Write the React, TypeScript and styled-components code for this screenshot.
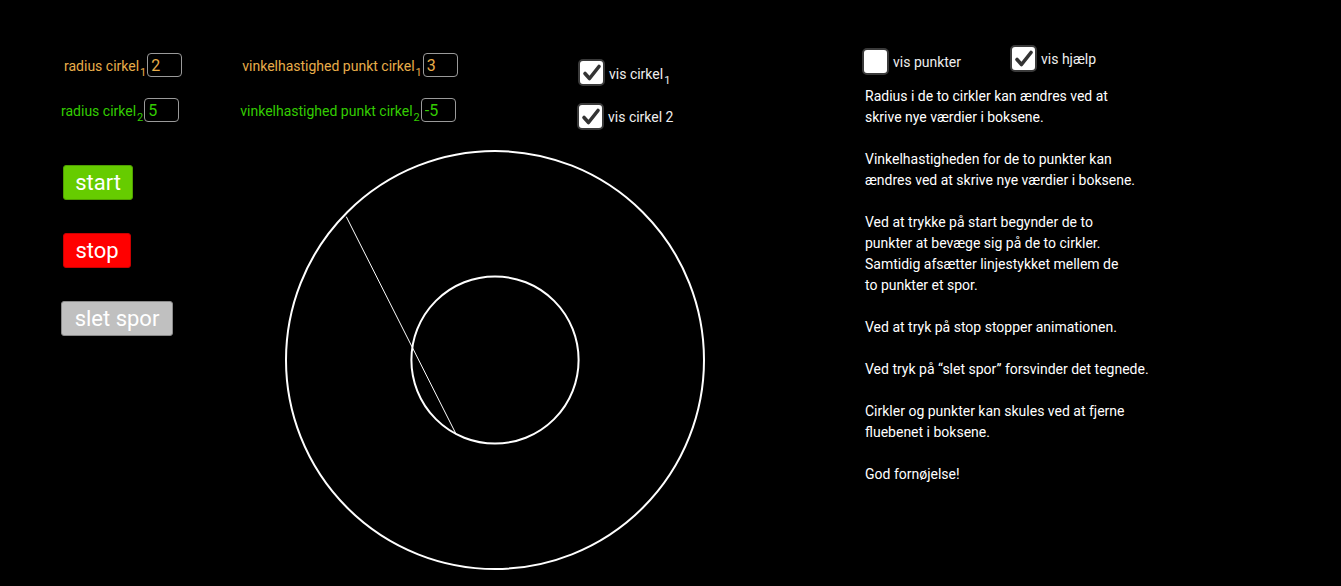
import React from 'react'
import styled, { createGlobalStyle } from 'styled-components'

const GlobalStyle = createGlobalStyle`
  html, body {
    margin: 0;
    padding: 0;
    background: #000000;
  }
  body {
    font-family: Roboto, 'Liberation Sans', sans-serif;
  }
`

const ORANGE = '#e8ad4a'
const GREEN = '#33cc00'

const Applet = styled.div`
  display: flex;
  width: 1341px;
  height: 586px;
  background: #000000;
  overflow: hidden;
`

const LeftPane = styled.div`
  display: flex;
  flex-direction: column;
  width: 862px;
  flex-shrink: 0;
`

const TopBand = styled.div`
  display: grid;
  grid-template-columns: 577px 1fr;
  height: 150px;
  box-sizing: border-box;
  padding-top: 53px;
`

const FieldRows = styled.div`
  display: flex;
  flex-direction: column;
  gap: 21px;
`

const FieldRow = styled.div<{ $indent: number; $gap: number }>`
  display: flex;
  align-items: center;
  padding-left: ${(p) => p.$indent}px;
  gap: ${(p) => p.$gap}px;
  height: 24px;
`

const Field = styled.label<{ $color: string }>`
  display: flex;
  align-items: center;
  color: ${(p) => p.$color};
  font-size: 14px;
  white-space: nowrap;
`

const Caption = styled.span`
  display: inline-block;
  line-height: 16px;
  padding-top: 2px;
`

const Sub = styled.sub`
  font-size: 11px;
  vertical-align: -5px;
  line-height: 0;
  margin-left: 1px;
`

const ValueBox = styled.input<{ $color: string }>`
  width: 35px;
  height: 24px;
  box-sizing: border-box;
  margin: 0 0 0 1px;
  padding: 0 0 0 3px;
  background: #000000;
  border: 1px solid #9a9a9a;
  border-radius: 4px;
  color: ${(p) => p.$color};
  font-family: Roboto, 'Liberation Sans', sans-serif;
  font-size: 16px;
  outline: none;
`

const CheckColumn = styled.div`
  display: flex;
  flex-direction: column;
  gap: 17px;
  padding-top: 6px;
`

const CheckItem = styled.label<{ $shift?: number; $lift?: number; $width?: number }>`
  display: flex;
  align-items: center;
  gap: 4px;
  width: ${(p) => (p.$width ? `${p.$width}px` : 'auto')};
  margin-left: ${(p) => p.$shift ?? 0}px;
  margin-top: ${(p) => p.$lift ?? 0}px;
  color: #eeeeee;
  font-size: 14px;
  white-space: nowrap;
`

const Box = styled.span`
  display: flex;
  align-items: center;
  justify-content: center;
  width: 27px;
  height: 27px;
  box-sizing: border-box;
  background: #ffffff;
  border: 2px solid #3a3a3a;
  border-radius: 5px;
  flex-shrink: 0;
`

const LowerBand = styled.div`
  display: flex;
`

const ButtonColumn = styled.div`
  display: flex;
  flex-direction: column;
  align-items: flex-start;
  gap: 33px;
  width: 285px;
  padding-top: 15px;
`

const ActionButton = styled.button<{ $bg: string; $edge: string; $w: number; $shift: number }>`
  width: ${(p) => p.$w}px;
  height: 35px;
  margin: 0 0 0 ${(p) => p.$shift}px;
  padding: 0;
  background: ${(p) => p.$bg};
  border: 1px solid ${(p) => p.$edge};
  border-radius: 3px;
  color: #ffffff;
  font-family: Roboto, 'Liberation Sans', sans-serif;
  font-size: 22px;
  line-height: 33px;
  text-align: center;
`

const Drawing = styled.svg`
  display: block;
  width: 420px;
  height: 436px;
`

const RightPane = styled.div`
  display: flex;
  flex-direction: column;
  padding-top: 45px;
`

const CheckRow = styled.div`
  display: flex;
  align-items: flex-start;
`

const HelpText = styled.div`
  margin-top: 11px;
  padding-left: 3px;
  color: #ffffff;
  font-size: 14px;
  line-height: 21px;
  white-space: pre-line;
`

const Checkbox = ({ checked }: { checked: boolean }) => (
  <Box>
    {checked && (
      <svg width='22' height='22' viewBox='0 0 22 22'>
        <polyline
          points='4,11.5 8.5,16.5 18,4.5'
          fill='none'
          stroke='#333333'
          strokeWidth='3.6'
          strokeLinecap='round'
          strokeLinejoin='round'
        />
      </svg>
    )}
  </Box>
)

const help = `Radius i de to cirkler kan ændres ved at
skrive nye værdier i boksene.

Vinkelhastigheden for de to punkter kan
ændres ved at skrive nye værdier i boksene.

Ved at trykke på start begynder de to
punkter at bevæge sig på de to cirkler.
Samtidig afsætter linjestykket mellem de
to punkter et spor.

Ved at tryk på stop stopper animationen.

Ved tryk på “slet spor” forsvinder det tegnede.

Cirkler og punkter kan skules ved at fjerne
fluebenet i boksene.

God fornøjelse!`

export default function App() {
  // circle centre in svg coords, unit = radius / value
  const cx = 210
  const cy = 210
  const unit = 41.8
  const r1 = 2 * unit
  const r2 = 5 * unit

  return (
    <Applet>
      <GlobalStyle />
      <LeftPane>
        <TopBand>
          <FieldRows>
            <FieldRow $indent={64} $gap={60}>
              <Field $color={ORANGE}>
                <Caption>
                  radius cirkel<Sub>1</Sub>
                </Caption>
                <ValueBox $color={ORANGE} defaultValue='2' />
              </Field>
              <Field $color={ORANGE}>
                <Caption>
                  vinkelhastighed punkt cirkel<Sub>1</Sub>
                </Caption>
                <ValueBox $color={ORANGE} defaultValue='3' />
              </Field>
            </FieldRow>
            <FieldRow $indent={61} $gap={61}>
              <Field $color={GREEN}>
                <Caption>
                  radius cirkel<Sub>2</Sub>
                </Caption>
                <ValueBox $color={GREEN} defaultValue='5' />
              </Field>
              <Field $color={GREEN}>
                <Caption>
                  vinkelhastighed punkt cirkel<Sub>2</Sub>
                </Caption>
                <ValueBox $color={GREEN} defaultValue='-5' />
              </Field>
            </FieldRow>
          </FieldRows>
          <CheckColumn>
            <CheckItem $shift={1}>
              <Checkbox checked />
              <Caption>
                vis cirkel<Sub>1</Sub>
              </Caption>
            </CheckItem>
            <CheckItem>
              <Checkbox checked />
              vis cirkel 2
            </CheckItem>
          </CheckColumn>
        </TopBand>
        <LowerBand>
          <ButtonColumn>
            <ActionButton $bg='#66cc00' $edge='#4f9f00' $w={70} $shift={63}>
              start
            </ActionButton>
            <ActionButton $bg='#ff0000' $edge='#c80000' $w={68} $shift={63}>
              stop
            </ActionButton>
            <ActionButton $bg='#c0c0c0' $edge='#8a8a8a' $w={112} $shift={61}>
              slet spor
            </ActionButton>
          </ButtonColumn>
          <Drawing viewBox='0 0 420 436'>
            <circle cx={cx} cy={cy} r={r2} fill='none' stroke='#ffffff' strokeWidth='2' />
            <circle cx={cx} cy={cy} r={r1} fill='none' stroke='#ffffff' strokeWidth='2' />
            <line x1={61.3} y1={66.7} x2={170.7} y2={283.3} stroke='#ffffff' strokeWidth='1' />
          </Drawing>
        </LowerBand>
      </LeftPane>
      <RightPane>
        <CheckRow>
          <CheckItem $lift={3} $width={148}>
            <Box />
            vis punkter
          </CheckItem>
          <CheckItem>
            <Checkbox checked />
            vis hjælp
          </CheckItem>
        </CheckRow>
        <HelpText>{help}</HelpText>
      </RightPane>
    </Applet>
  )
}
